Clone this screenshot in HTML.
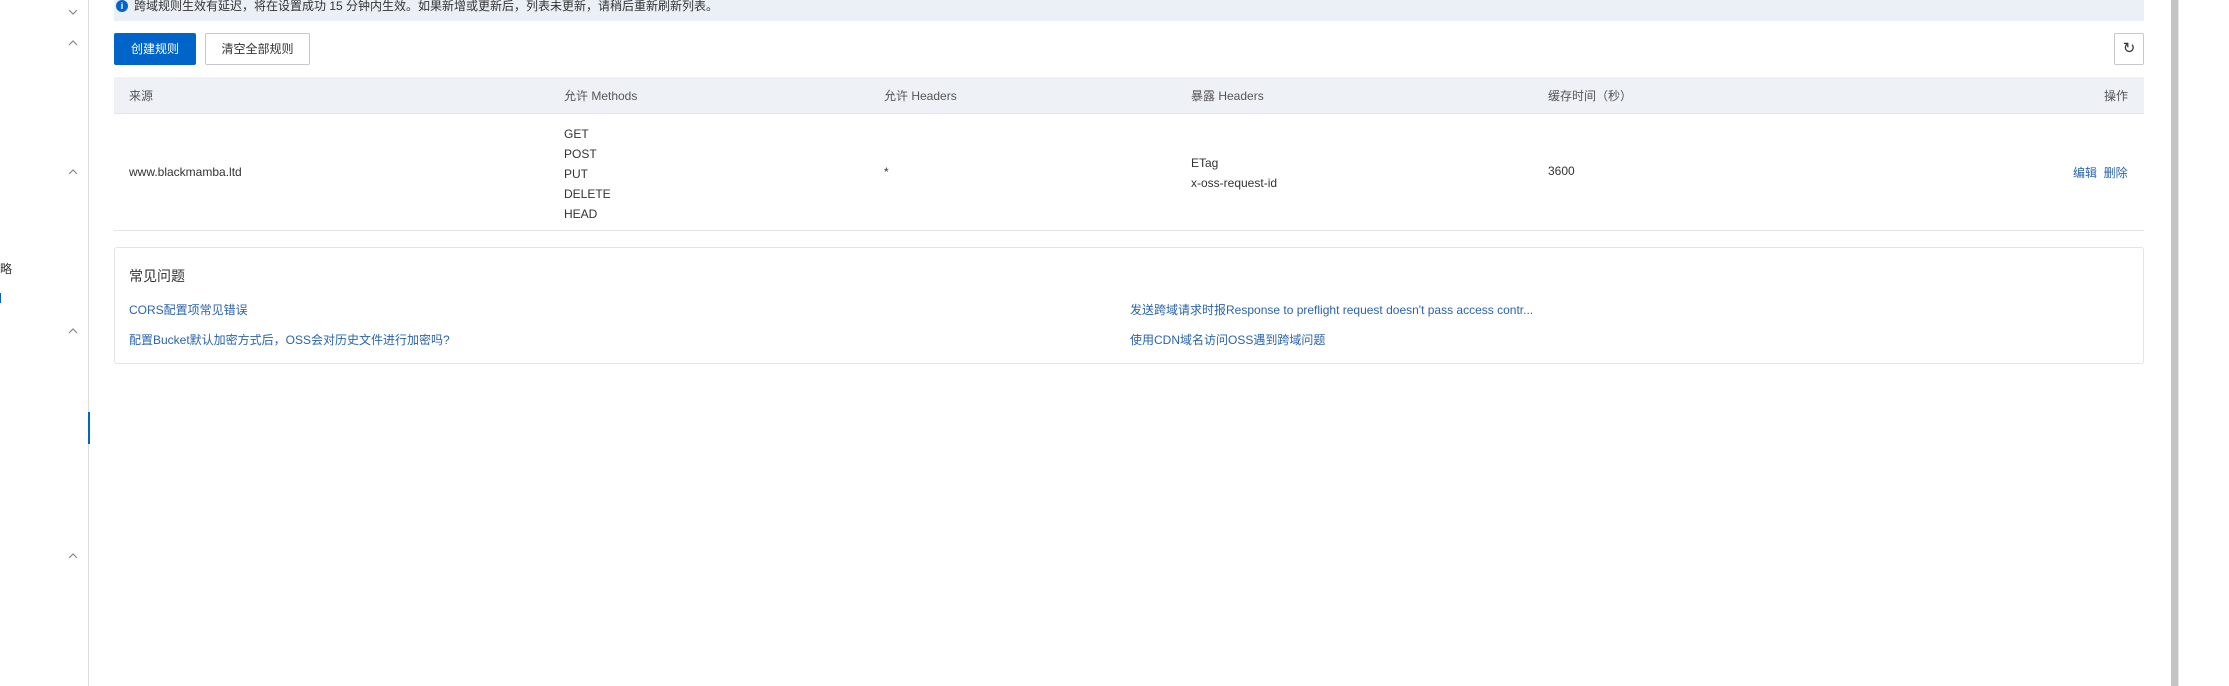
<!DOCTYPE html>
<html><head><meta charset="utf-8"><style>
*{margin:0;padding:0;box-sizing:border-box}
body{width:2229px;height:686px;background:#fff;position:relative;overflow:hidden;font-family:"Liberation Sans","Noto Sans CJK SC",sans-serif;font-size:12px;color:#333}
.a{position:absolute;white-space:nowrap}
.chev{position:absolute;left:68px;width:10px;height:6px}
.lk{color:#2a64ad}
.hd{line-height:34px;top:80px;color:#555}
</style></head><body>
<div class="a" style="left:88px;top:0;width:1px;height:686px;background:#ddd"></div>
<div class="a" style="left:88px;top:412px;width:2px;height:32px;background:#0064c8"></div>
<svg class="chev" style="top:9px" viewBox="0 0 10 6"><path d="M1 1L5 5L9 1" fill="none" stroke="#888" stroke-width="1.2"/></svg>
<svg class="chev" style="top:40px" viewBox="0 0 10 6"><path d="M1 5L5 1L9 5" fill="none" stroke="#888" stroke-width="1.2"/></svg>
<svg class="chev" style="top:169px" viewBox="0 0 10 6"><path d="M1 5L5 1L9 5" fill="none" stroke="#888" stroke-width="1.2"/></svg>
<svg class="chev" style="top:328px" viewBox="0 0 10 6"><path d="M1 5L5 1L9 5" fill="none" stroke="#888" stroke-width="1.2"/></svg>
<svg class="chev" style="top:553px" viewBox="0 0 10 6"><path d="M1 5L5 1L9 5" fill="none" stroke="#888" stroke-width="1.2"/></svg>
<div class="a" style="left:0;top:260px;font-size:12px">略</div>
<div class="a" style="left:0;top:293px;width:1px;height:10px;background:#0064c8"></div>

<div class="a" style="left:114px;top:0;width:2030px;height:21px;background:#ebf0f6"></div>
<div class="a" style="left:116px;top:0;width:12px;height:12px;border-radius:50%;background:#0064c8;color:#fff;font-size:9px;text-align:center;line-height:12px;font-weight:bold">i</div>
<div class="a" style="left:134px;top:-3px;font-size:12px;color:#333">跨域规则生效有延迟，将在设置成功 15 分钟内生效。如果新增或更新后，列表未更新，请稍后重新刷新列表。</div>

<div class="a" style="left:114px;top:33px;width:82px;height:32px;background:#0064c8;border-radius:2px;color:#fff;line-height:32px;text-align:center">创建规则</div>
<div class="a" style="left:205px;top:33px;width:105px;height:32px;border:1px solid #c8c8c8;border-radius:2px;line-height:30px;text-align:center">清空全部规则</div>
<div class="a" style="left:2114px;top:33px;width:30px;height:32px;border:1px solid #c8c8c8;border-radius:2px;line-height:30px;text-align:center;font-size:15px">&#8635;</div>

<div class="a" style="left:114px;top:77px;width:2030px;height:37px;background:#eef1f6;border-bottom:1px solid #e2e4e8"></div>
<div class="a hd" style="left:129px;top:79px">来源</div>
<div class="a hd" style="left:564px;top:79px">允许 Methods</div>
<div class="a hd" style="left:884px;top:79px">允许 Headers</div>
<div class="a hd" style="left:1191px;top:79px">暴露 Headers</div>
<div class="a hd" style="left:1548px;top:79px">缓存时间（秒）</div>
<div class="a hd" style="right:101px;top:79px">操作</div>

<div class="a" style="left:129px;top:165px">www.blackmamba.ltd</div>
<div class="a" style="left:564px;top:124px;line-height:20px">GET<br>POST<br>PUT<br>DELETE<br>HEAD</div>
<div class="a" style="left:884px;top:165px">*</div>
<div class="a" style="left:1191px;top:153px;line-height:20px">ETag<br>x-oss-request-id</div>
<div class="a" style="left:1548px;top:164px">3600</div>
<div class="a lk" style="left:2073px;top:164px">编辑&nbsp;&nbsp;删除</div>
<div class="a" style="left:114px;top:230px;width:2030px;height:1px;background:#e2e4e8"></div>

<div class="a" style="left:114px;top:247px;width:2030px;height:117px;border:1px solid #e2e4e8;border-radius:3px"></div>
<div class="a" style="left:129px;top:266px;font-size:14px">常见问题</div>
<div class="a lk" style="left:129px;top:301px">CORS配置项常见错误</div>
<div class="a lk" style="left:129px;top:331px">配置Bucket默认加密方式后，OSS会对历史文件进行加密吗?</div>
<div class="a lk" style="left:1130px;top:301px">发送跨域请求时报Response to preflight request doesn't pass access contr...</div>
<div class="a lk" style="left:1130px;top:331px">使用CDN域名访问OSS遇到跨域问题</div>

<div class="a" style="left:2171px;top:0;width:7px;height:686px;background:#c4c4c4"></div>
<div class="a" style="left:2178px;top:0;width:1px;height:686px;background:#e6e6e6"></div>
</body></html>
